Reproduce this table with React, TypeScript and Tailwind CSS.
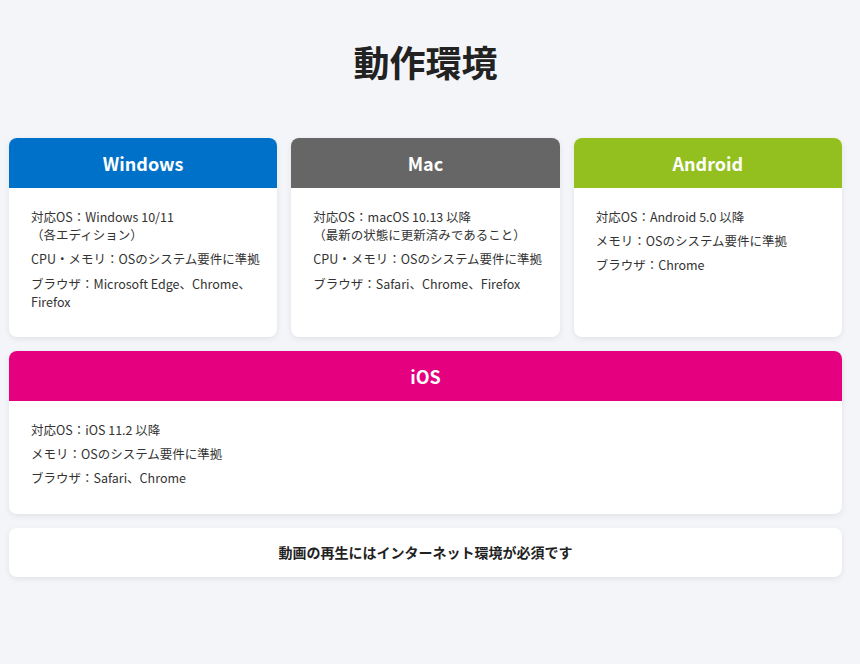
const jp = { fontFamily: '"Noto Sans CJK JP", "Noto Sans", sans-serif' };

type Spec = {
  name: string;
  color: string;
  items: React.ReactNode[];
};

const specs: Spec[] = [
  {
    name: "Windows",
    color: "bg-[#0071c8]",
    items: [
      <>
        対応OS：Windows 10/11
        <br />
        （各エディション）
      </>,
      "CPU・メモリ：OSのシステム要件に準拠",
      "ブラウザ：Microsoft Edge、Chrome、Firefox",
    ],
  },
  {
    name: "Mac",
    color: "bg-[#666666]",
    items: [
      <>
        対応OS：macOS 10.13 以降
        <br />
        （最新の状態に更新済みであること）
      </>,
      "CPU・メモリ：OSのシステム要件に準拠",
      "ブラウザ：Safari、Chrome、Firefox",
    ],
  },
  {
    name: "Android",
    color: "bg-[#93c01f]",
    items: ["対応OS：Android 5.0 以降", "メモリ：OSのシステム要件に準拠", "ブラウザ：Chrome"],
  },
];

const ios: Spec = {
  name: "iOS",
  color: "bg-[#e4007f]",
  items: ["対応OS：iOS 11.2 以降", "メモリ：OSのシステム要件に準拠", "ブラウザ：Safari、Chrome"],
};

const SpecCard = ({ spec }: { spec: Spec }) => (
  <div className="flex flex-col overflow-hidden rounded-lg bg-white shadow-[0_2px_6px_rgba(0,0,0,0.08)]">
    <div className={`${spec.color} flex h-[50px] items-center justify-center`}>
      <h2 className="text-[18px] font-bold leading-none text-white">{spec.name}</h2>
    </div>
    <ul className="pl-[22px] pr-[14px] pt-[20px] pb-[20px] text-[12.5px] leading-[18.2px] text-[#333333]">
      {spec.items.map((item, i) => (
        <li key={i} className="mb-[6px]">
          {item}
        </li>
      ))}
    </ul>
  </div>
);

export default function App() {
  return (
    <div className="min-h-[664px] bg-[#f4f5f8]" style={jp}>
      <div className="pl-[9px] pr-[18px] pt-[40px] pb-10">
        <h1 className="mb-[55px] text-center text-[36px] font-bold leading-[43px] text-[#222222]">
          動作環境
        </h1>

        <div className="grid grid-cols-3 gap-x-[14px]">
          {specs.map((s) => (
            <SpecCard key={s.name} spec={s} />
          ))}
        </div>

        <div className="mt-[14px]">
          <SpecCard spec={ios} />
        </div>

        <div className="mt-[14px] rounded-lg bg-white py-[15px] text-center shadow-[0_2px_6px_rgba(0,0,0,0.08)]">
          <p className="text-[14px] font-bold leading-[1.4] text-[#222222]">
            動画の再生にはインターネット環境が必須です
          </p>
        </div>
      </div>
    </div>
  );
}
